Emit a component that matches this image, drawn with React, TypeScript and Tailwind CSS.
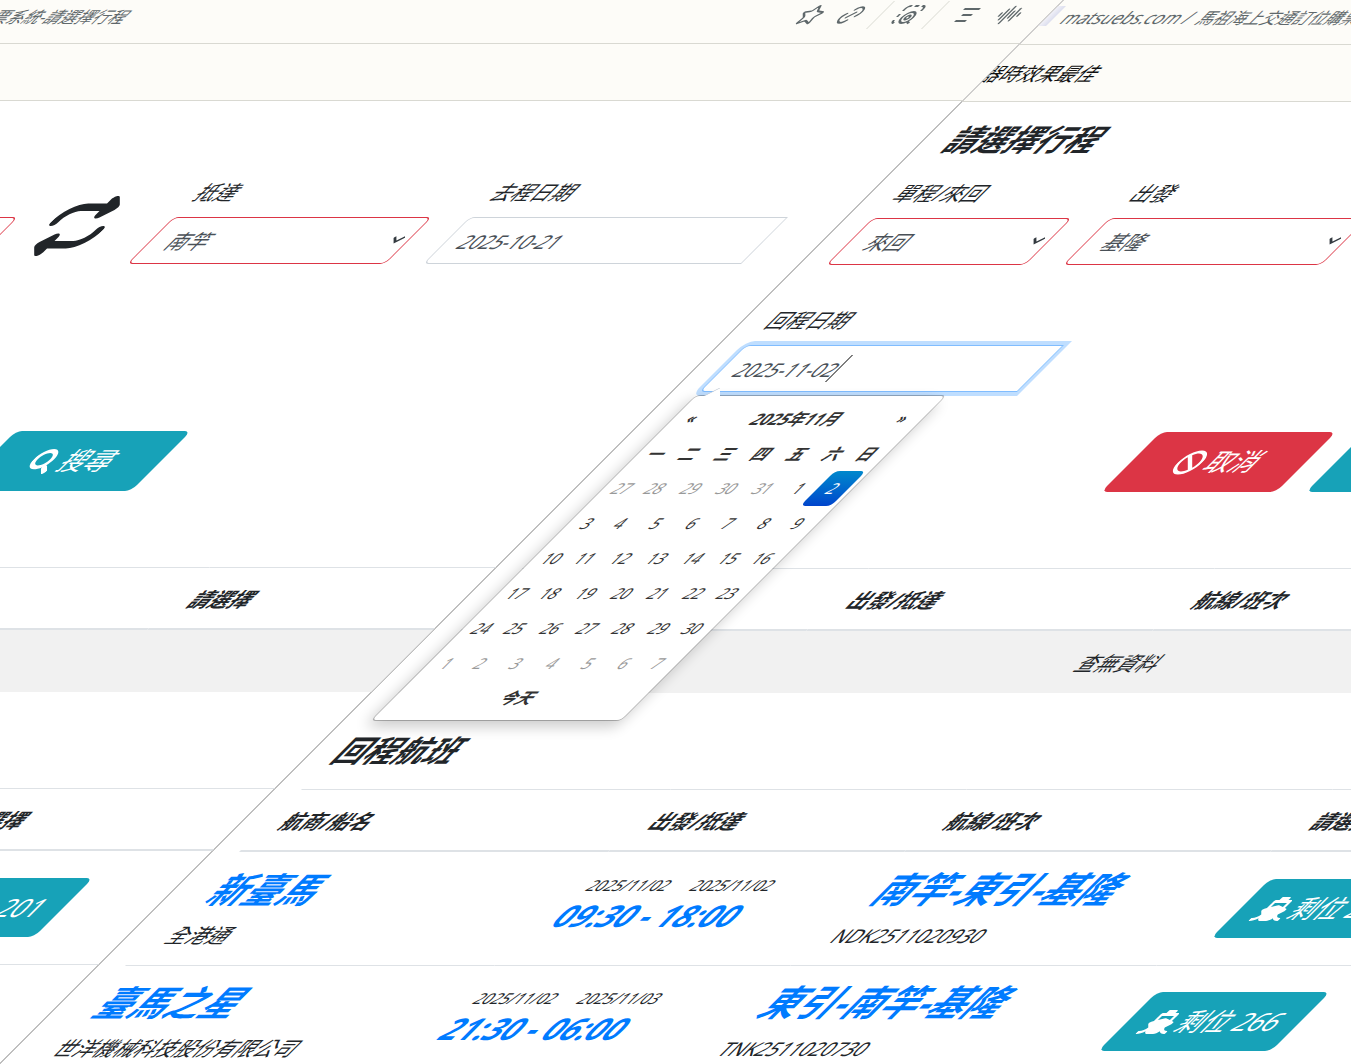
import { useId } from "react";
import type { ReactNode } from "react";
import { AudioLines, Link2, Star } from "lucide-react";
import { FaBan, FaSearch, FaShip } from "react-icons/fa";
import { FaRepeat } from "react-icons/fa6";

const FONT = "font-['Noto_Sans','Noto_Sans_CJK_TC',sans-serif]";

function AddressBar() {
  return (
    <div className="flex h-[45px] items-center border-b border-[#d9d9d2] bg-[#fdfcf8] pr-7 pb-3 text-[#5f686b]">
      <span className="h-5 w-2 bg-linear-to-r from-[#f1f1f8] to-[#dcdeee]" />
      <p className="ml-2.5 flex items-baseline gap-2 pt-1 text-[17px] leading-6 whitespace-nowrap">
        <span>matsuebs.com /</span>
        <span className="text-[16px]">馬祖海上交通訂位購票系統-請選擇行程</span>
      </p>
      <div className="ml-auto flex items-center">
        <button aria-label="收藏">
          <Star className="size-[22px]" strokeWidth={2} />
        </button>
        <button aria-label="複製連結" className="ml-[18px]">
          <Link2 className="size-[22px] -rotate-45" strokeWidth={2} />
        </button>
        <span className="ml-[18px] h-7 w-px bg-[#d9d9d2]" />
        <button aria-label="擷取" className="ml-4">
          <svg viewBox="0 0 22 22" className="size-[22px]" fill="none" stroke="currentColor" strokeWidth="2">
            <path d="M2 7V5a3 3 0 0 1 3-3h1M9 2h4M16 2h1a3 3 0 0 1 3 3v2M2 10v3M2 16a3 3 0 0 0 3 3" />
            <circle cx="13" cy="13.5" r="5.5" />
            <circle cx="13" cy="13.5" r="2" />
            <path d="M17 17.5l3 2" />
          </svg>
        </button>
        <span className="ml-4 h-7 w-px bg-[#d9d9d2]" />
        <button aria-label="閱讀模式" className="ml-5">
          <svg viewBox="0 0 22 22" className="size-[22px]" fill="none" stroke="currentColor" strokeWidth="2">
            <path d="M2 5h16M6 11h10M5 17h11" />
          </svg>
        </button>
        <button aria-label="朗讀" className="ml-5">
          <AudioLines className="size-[22px]" strokeWidth={2} />
        </button>
      </div>
    </div>
  );
}

function SelectField({ label, value }: { label: string; value: string }) {
  const id = useId();
  return (
    <div className="px-[19px]">
      <label htmlFor={id} className="mb-2.5 block leading-7">
        {label}
      </label>
      <div className="relative">
        <select
          id={id}
          defaultValue={value}
          className="h-[47px] w-full appearance-none rounded-[5px] border border-[#dc3545] bg-white pt-0.5 pl-[19px] text-[#495057]"
        >
          <option>{value}</option>
        </select>
        <svg
          viewBox="0 0 12 10"
          className="pointer-events-none absolute top-[18px] right-1.5 h-2.5 w-3"
          fill="none"
          stroke="#343a40"
          strokeWidth="2"
        >
          <path d="M1 2l5 5 5-5" />
        </svg>
      </div>
    </div>
  );
}

function DateField({ label, value, active, children }: { label: string; value: string; active?: boolean; children?: ReactNode }) {
  const id = useId();
  return (
    <div className="px-[19px]">
      <label htmlFor={id} className="mb-2.5 block leading-7">
        {label}
      </label>
      <div className="relative">
        <input
          id={id}
          type="text"
          defaultValue={value}
          className={
            active
              ? "h-[47px] w-full rounded-l-[5px] border border-[#80bdff] bg-white px-[15px] pt-0.5 text-[19px] text-[#495057] ring-4 ring-[#bfdeff] outline-none"
              : "h-[47px] w-full rounded-l-[5px] border border-[#ced4da] bg-white px-[15px] pt-0.5 text-[19px] text-[#495057]"
          }
        />
        {children}
      </div>
    </div>
  );
}

const WEEKDAYS = ["一", "二", "三", "四", "五", "六", "日"];
const WEEKS = [
  [27, 28, 29, 30, 31, 1, 2],
  [3, 4, 5, 6, 7, 8, 9],
  [10, 11, 12, 13, 14, 15, 16],
  [17, 18, 19, 20, 21, 22, 23],
  [24, 25, 26, 27, 28, 29, 30],
  [1, 2, 3, 4, 5, 6, 7],
];

function dayClass(week: number, day: number) {
  if (week === 0 && day === 2)
    return "h-[35px] rounded-[5px] bg-linear-to-b from-[#0088cc] to-[#0044cc] text-white";
  if ((week === 0 && day > 20) || week === 5) return "h-[35px] text-[#999999]";
  return "h-[35px]";
}

function Calendar() {
  return (
    <div className="absolute top-[50px] left-0 z-10 rounded-[5px] border border-black/25 bg-white bg-clip-padding px-1 pt-[5px] pb-1 text-[15px] text-[#333333] shadow-[0_6px_12px_rgba(0,0,0,0.2)]">
      <svg viewBox="0 0 16 8" className="absolute -top-2 left-2 h-2 w-4">
        <path d="M0 8L8 0l8 8z" fill="#ffffff" />
        <path d="M0 8L8 0" stroke="#b9c3cf" />
      </svg>
      <table className="w-[241px] table-fixed border-collapse text-center">
        <colgroup>
          <col className="w-[30px]" />
          <col span={5} className="w-9" />
          <col className="w-[31px]" />
        </colgroup>
        <thead className="text-[16px]">
          <tr>
            <th className="h-[35px] text-[13px]">
              <button aria-label="上個月">«</button>
            </th>
            <th colSpan={5}>2025年11月</th>
            <th className="text-[13px]">
              <button aria-label="下個月">»</button>
            </th>
          </tr>
          <tr>
            {WEEKDAYS.map((d) => (
              <th key={d} className="h-[35px]">
                {d}
              </th>
            ))}
          </tr>
        </thead>
        <tbody>
          {WEEKS.map((days, w) => (
            <tr key={w}>
              {days.map((d) => (
                <td key={d} className={dayClass(w, d)}>
                  {d}
                </td>
              ))}
            </tr>
          ))}
        </tbody>
        <tfoot className="text-[16px]">
          <tr>
            <th colSpan={7} className="h-[35px] pb-0.5">
              今天
            </th>
          </tr>
        </tfoot>
      </table>
    </div>
  );
}

function HeadCell({ children, width }: { children: ReactNode; width: string }) {
  return (
    <th className={`h-[63px] border-t border-b-2 border-[#dee2e6] px-[15px] pt-[3px] text-left font-bold ${width}`}>
      {children}
    </th>
  );
}

const SAILINGS = [
  {
    ship: "新臺馬",
    company: "全港通",
    from: "2025/11/02",
    to: "2025/11/02",
    time: "09:30 - 18:00",
    route: "南竿-東引-基隆",
    code: "NDK2511020930",
    seats: 201,
  },
  {
    ship: "臺馬之星",
    company: "世洋機械科技股份有限公司",
    from: "2025/11/02",
    to: "2025/11/03",
    time: "21:30 - 06:00",
    route: "東引-南竿-基隆",
    code: "TNK2511020730",
    seats: 266,
  },
];

function Sailings() {
  return (
    <table className="w-full table-fixed border-separate border-spacing-0">
      <thead>
        <tr>
          <HeadCell width="w-[369px]">航商/船名</HeadCell>
          <HeadCell width="w-[296px]">出發/抵達</HeadCell>
          <HeadCell width="w-[366px]">航線/班次</HeadCell>
          <HeadCell width="w-auto">請選擇</HeadCell>
        </tr>
      </thead>
      <tbody className="[&_td]:h-[113px] [&_td]:border-t [&_td]:px-[15px] [&_td]:pt-[15px] [&_td]:align-top [&_tr:first-child_td]:border-transparent [&_tr+tr_td]:border-[#dee2e6]">
        {SAILINGS.map((s) => (
          <tr key={s.code}>
            <td>
              <p className="text-[35px] leading-11 font-bold text-[#007bff]">{s.ship}</p>
              <p className="mt-2.5 leading-7">{s.company}</p>
            </td>
            <td>
              <p className="flex gap-6 pt-1.5 text-[15px] leading-[22px]">
                <span>{s.from}</span>
                <span>{s.to}</span>
              </p>
              <p className="mt-0.5 text-[30px] leading-9 font-bold whitespace-nowrap text-[#007bff]">{s.time}</p>
            </td>
            <td>
              <p className="text-[36px] leading-11 font-bold whitespace-nowrap text-[#007bff]">{s.route}</p>
              <p className="mt-2.5 text-[19px] leading-7">{s.code}</p>
            </td>
            <td>
              <button className="mt-[11px] ml-3 flex h-[59px] items-center gap-1 rounded-[6px] bg-[#17a2b8] px-5 text-[25px] text-white">
                <FaShip className="h-6 w-[30px]" />
                <span>剩位 {s.seats}</span>
              </button>
            </td>
          </tr>
        ))}
      </tbody>
    </table>
  );
}

function BookingPage() {
  return (
    <div className="w-full shrink-0 overflow-hidden bg-white">
      <AddressBar />
      <div className="flex h-[57px] items-center border-b border-[#d9d9d2] bg-[#fdfcf8] text-[#111111]">
        <p className="-ml-1.5 pt-0.5 text-[19px] whitespace-nowrap">器時效果最佳</p>
      </div>
      <main className="-mr-[79px] ml-2 pt-[21px]">
        <h2 className="px-[19px] text-[30px] leading-[34px] font-bold">請選擇行程</h2>
        <form>
          <div className="mt-[23px] grid grid-cols-[4fr_5fr_2fr_5fr_6fr_2fr]">
            <SelectField label="單程/來回" value="來回" />
            <SelectField label="出發" value="基隆" />
            <button type="button" aria-label="交換出發與抵達" className="mt-[17px] mr-5 self-start justify-self-center">
              <FaRepeat className="size-[60px]" />
            </button>
            <SelectField label="抵達" value="南竿" />
            <DateField label="去程日期" value="2025-10-21" />
          </div>
          <div className="mt-[42px] w-1/4">
            <DateField label="回程日期" value="2025-11-02" active>
              <span className="absolute top-2.5 left-[116px] h-[27px] w-px bg-black" />
              <Calendar />
            </DateField>
          </div>
          <div className="mt-10 flex justify-center gap-[30px] text-[25px] text-white">
            <button type="button" className="flex h-[60px] w-[175px] items-center justify-center gap-1.5 rounded-[6px] bg-[#dc3545]">
              <FaBan className="size-[25px]" />
              取消
            </button>
            <button type="button" className="flex h-[60px] w-[175px] items-center justify-center gap-1.5 rounded-[6px] bg-[#17a2b8]">
              <FaSearch className="size-[25px]" />
              搜尋
            </button>
          </div>
        </form>
        <section className="mt-[76px] px-[19px]">
          <table className="w-full table-fixed border-separate border-spacing-0">
            <thead>
              <tr>
                <HeadCell width="w-1/4">航商/船名</HeadCell>
                <HeadCell width="w-1/4">出發/抵達</HeadCell>
                <HeadCell width="w-1/4">航線/班次</HeadCell>
                <HeadCell width="w-1/4">請選擇</HeadCell>
              </tr>
            </thead>
            <tbody>
              <tr>
                <td colSpan={4} className="h-[62px] bg-[#f1f1f1] pt-1 text-center">
                  查無資料
                </td>
              </tr>
            </tbody>
          </table>
          <h2 className="mt-[41px] mb-[21px] text-[30px] leading-[34px] font-bold">回程航班</h2>
          <Sailings />
        </section>
      </main>
    </div>
  );
}

export default function App() {
  return (
    <div className={`h-screen overflow-hidden bg-white text-[20px] text-[#212529] ${FONT}`}>
      <div className="ml-[calc(100vh-100vw)] flex w-screen origin-top-left -skew-x-45">
        <div className="-mt-px flex w-full shrink-0 border-r border-black">
          <BookingPage />
        </div>
        <BookingPage />
      </div>
    </div>
  );
}
